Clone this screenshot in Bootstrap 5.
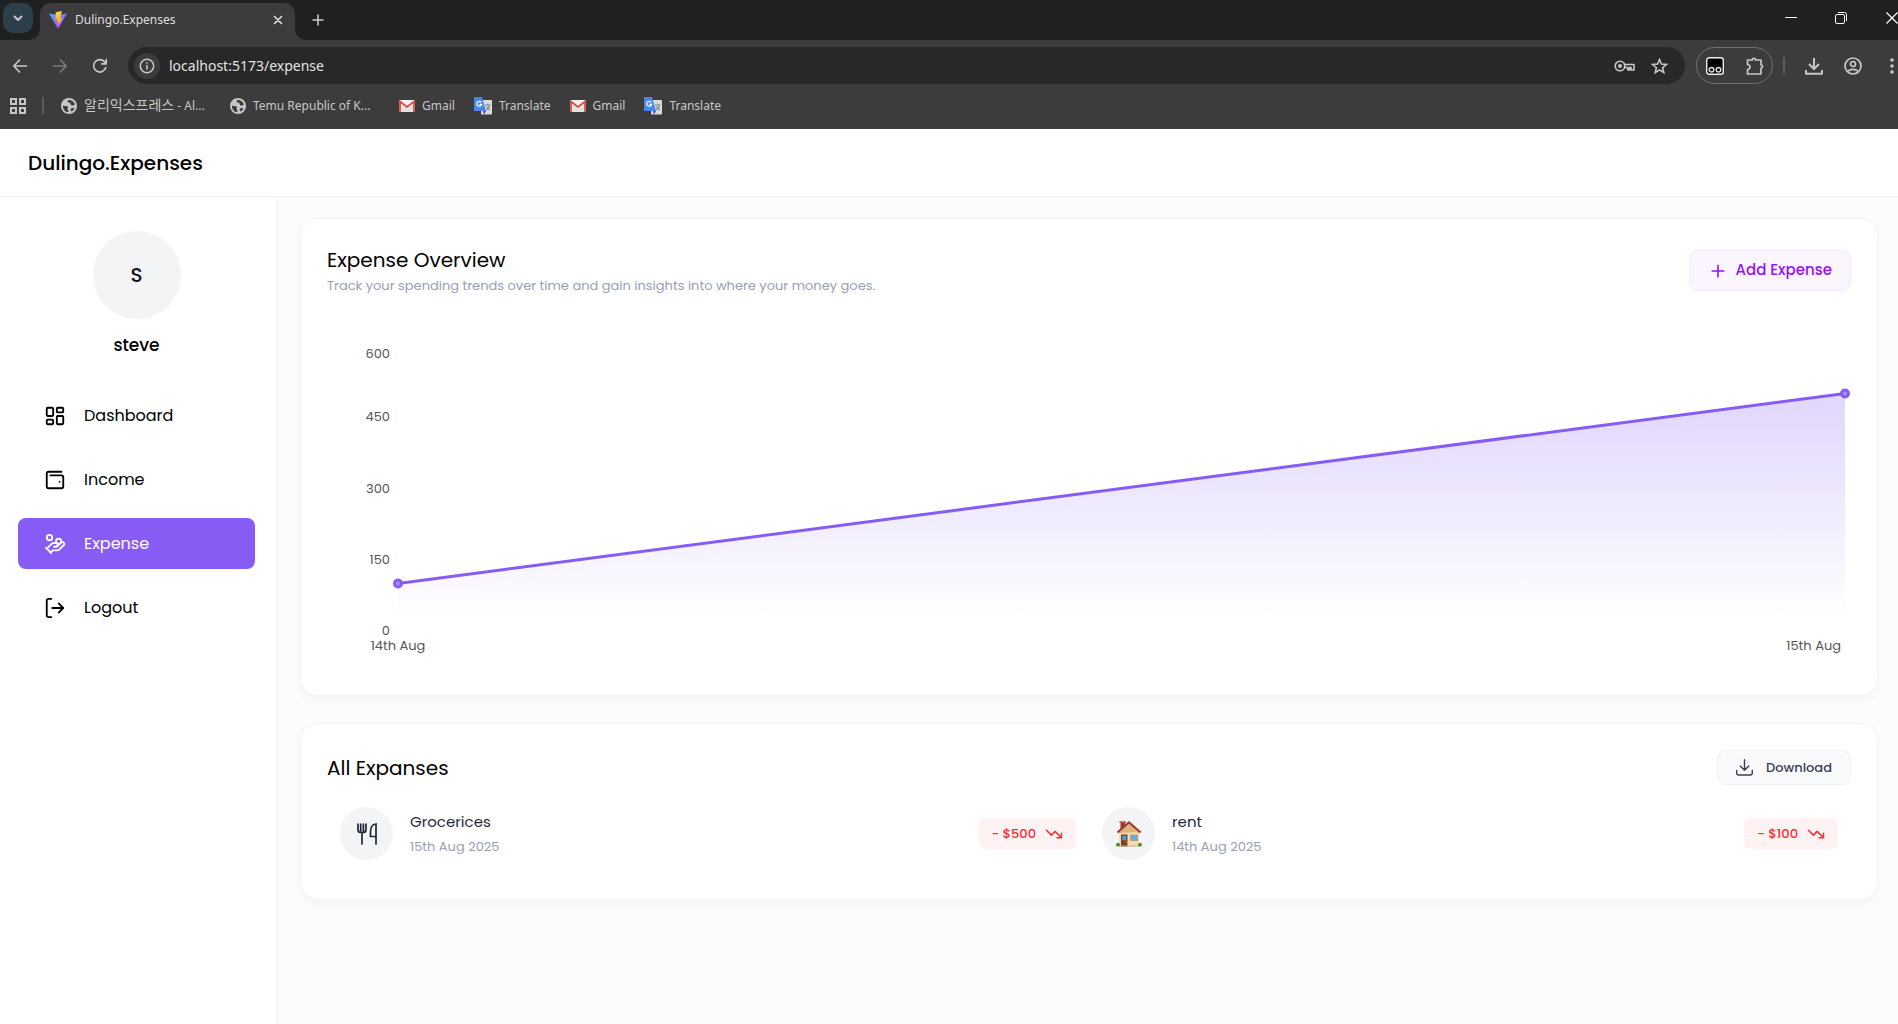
<!DOCTYPE html>
<html lang="en">
<head>
<meta charset="utf-8">
<meta name="viewport" content="width=device-width, initial-scale=1">
<title>Dulingo.Expenses</title>
<link href="https://cdn.jsdelivr.net/npm/bootstrap@5.3.0/dist/css/bootstrap.min.css" rel="stylesheet">
<style>
:root{--ui:"Noto Sans","Noto Sans CJK KR",sans-serif;--violet:#875cf5}
body{font-family:Poppins,Inter,sans-serif;color:#000;background:#fcfcfc;overflow-x:hidden}
svg{display:block;flex:none}
.ico{fill:none;stroke:currentColor;stroke-width:2;stroke-linecap:round;stroke-linejoin:round}
button.plain{background:none;border:0;padding:0;color:inherit;line-height:1}
/* browser chrome */
.browser{background:#3c3c3c;color:#c7c7c7;font-family:var(--ui)}
.tabstrip{background:#1f2120;height:40px;padding-left:3px}
.tabmenu{width:30px;height:30px;margin:3px 0 0;border-radius:10px!important;background:#2d3f4b!important;color:#e3e3e3}
.tab-on{width:255px;height:37px;margin:3px 0 0 7px;padding:0 12px 4px 9px;background:#3c3c3c;border-radius:11px 11px 0 0;color:#dfdfdf;font-size:12px;position:relative}
.tab-on::before,.tab-on::after{content:"";position:absolute;bottom:0;width:11px;height:11px}
.tab-on::before{left:-11px;background:radial-gradient(circle at 0 0,transparent 11px,#3c3c3c 11px)}
.tab-on::after{right:-11px;background:radial-gradient(circle at 100% 0,transparent 11px,#3c3c3c 11px)}
.wincontrols{gap:38px;color:#fff}
.toolbar{height:51px;padding:0 0 0 12px}
.navs{gap:24px;width:116px}
.addr{height:37px;background:#282828;border-radius:19px;padding:0 17px 0 6px}
.addr input{background:none;border:0;outline:0;color:#e3e3e3;font-size:14px;padding:0}
.siteinfo{width:26px;height:26px;border-radius:50%!important;background:#3c3c3c!important;margin-right:9px}
.extpill{width:77px;height:37px;border:1px solid #707070;border-radius:19px;margin:0 10px 0 11px;padding:0 8px 0 9px}
.rightset{gap:21px;margin-left:20px}
.rightset .menu{padding:0 4px 0 7px}
.vline{width:2px;height:17px;background:#5c5c5c;border-radius:1px}
.bookmarks{height:38px;padding:0 0 9px 10px;font-size:12px}
.bookmarks .vline{margin:0 17px 0 16px}
.bookmarks a{color:#c7c7c7;text-decoration:none;white-space:nowrap;gap:7px;margin-right:19px}
.bookmarks .hangul{font-size:14px;line-height:18px}
.bm-wide{width:150px}
/* app */
.apphead{height:68px;padding:0 28px;background:#fff;border-bottom:1px solid #f1f1f1}
.brand{font-size:20px;font-weight:500;line-height:30px;margin:0}
.side{width:278px;background:#fff;border-right:1px solid #f1f1f1;padding:34px 22px 0 18px;min-height:calc(100vh - 197px)}
.avatar{width:88px;height:88px;border-radius:50%;background:#f3f4f6;font-size:20px;font-weight:500;color:#101828}
.uname{font-size:17px;font-weight:500;line-height:26px;margin:13px 0 32px}
.side nav{gap:13px}
.side nav a{height:51px;border-radius:8px;padding:0 26px;gap:18px;color:#000;text-decoration:none;font-size:16px}
.side nav a.on{background:var(--violet);color:#fff}
.mainpane{padding:21px 20px 22px 22px;gap:27px}
.panel{background:#fff;border:1px solid #f3f4f6;border-radius:17px;box-shadow:0 4px 8px #f3f4f6;padding:26px}
.panel h2{font-size:20px;font-weight:400;line-height:30px;margin:0}
.sub{font-size:13px;line-height:20px;color:#99a1af;margin:1px 0 0}
.btn-add{height:41px;margin-top:5px;border:1px solid #f3e8ff;background:#faf5ff;color:#9810fa;border-radius:9px;font-size:15px;font-weight:500;padding:0 18px;gap:8px}
.btn-dl{height:35px;border:1px solid #f0f1f4;background:#f9fafb;color:#364153;border-radius:9px;font-size:13px;font-weight:500;padding:0 18px;gap:13px}
.plot{height:285px;margin:50px 6px 38px 71px}
.plot svg{overflow:visible;width:100%;height:100%}
.plot text{fill:#555;font-size:13px}
.entries{margin-top:9px}
.entry{padding:13px}
.pic{width:53px;height:53px;border-radius:50%;background:#f3f4f6;color:#1e2939;margin-right:17px}
.ename{font-size:15px;line-height:22px;font-weight:400;color:#1e2939}
.edate{font-size:13px;line-height:20px;color:#99a1af;margin-top:4px}
.amt{height:31px;border-radius:6px;background:#fef2f2;color:#fb2c36;font-size:13px;font-weight:500;padding:0 13px;gap:9px}
</style>
</head>
<body>
<svg width="0" height="0" class="position-absolute" aria-hidden="true">
 <defs>
  <symbol id="globe" viewBox="0 0 16 16"><circle cx="8" cy="8" r="8" fill="#c4c7c9"/><path d="M2 7.500C3 8.500 5 7.500 6.500 8.500 8 9.500 5.500 10.500 7 12c1 1 .5 1.500 0 2.200C4 14 1.700 11 2 7.500zM7 2c3-.5 6 1.500 7 4.500-1 .5-1.500 1-2.500 1C9 7.500 10.500 5.500 9 5 7.500 4.600 6 4 7 2zM10 10.500c1.500-.5 2.500-.5 3.500-.5-.5 1.500-1.800 3-3 3.500-.8-.8-1.200-2-.5-3z" fill="#3c3c3c"/></symbol>
  <symbol id="gmail" viewBox="0 0 16 12"><rect width="16" height="12" rx="1.200" fill="#f2f2f2"/><path d="M2 12V4l6 4 6-4v8z" fill="#e2e2e2"/><path d="M1 12V1.500L8 7l7-5.500V12" fill="none" stroke="#d9453a" stroke-width="1.700"/></symbol>
  <symbol id="gtr" viewBox="0 0 18 18"><rect x="7" y="3" width="11" height="14.500" rx="1" fill="#dcdcdc"/><path d="M11 8h5.500M13.700 6.500V8m2 0c-.5 2.500-2 4-4 5m.5-3.500c1 1.500 2 2.500 3.700 3.500" fill="none" stroke="#7c8a92" stroke-width="1.100"/><path d="M1 0h7l4 14H1a1 1 0 0 1-1-1V1a1 1 0 0 1 1-1z" fill="#4a86f0"/><path d="M9 14h3l-2 3.500z" fill="#2c50b8"/><path d="M7.300 5.400A2.500 2.500 0 1 0 7.700 7.300H5.300" fill="none" stroke="#fff" stroke-width="1.200"/></symbol>
  <symbol id="trend" viewBox="0 0 24 24"><path d="M16 17h6v-6M22 17l-8.500-8.500-5 5L2 7"/></symbol>
 </defs>
</svg>

<header class="browser">
 <div class="tabstrip d-flex">
  <button class="plain tabmenu d-flex align-items-center justify-content-center" aria-label="Search tabs"><svg class="ico" width="10" height="10" viewBox="0 0 10 10"><path d="M1.500 3.500 5 7l3.500-3.500"/></svg></button>
  <div class="tab-on d-flex align-items-center">
   <svg width="18" height="18" viewBox="0 0 18 18"><defs><linearGradient id="va" x1="0" y1="0" x2=".6" y2="1"><stop offset="0" stop-color="#41b8ff"/><stop offset="1" stop-color="#bd34fe"/></linearGradient><linearGradient id="vb" x1="0" y1="0" x2="0" y2="1"><stop offset="0" stop-color="#ffd93c"/><stop offset="1" stop-color="#ff9f0a"/></linearGradient></defs><path d="M0 2.500 9 18 18 2.500 9 4z" fill="url(#va)"/><path d="M13 0 6.800 1.300 6.300 8.500l2.300-.5-.7 3.500 1.800-.5L8.800 16l4.700-9-2.500.5z" fill="url(#vb)"/></svg>
   <span class="flex-grow-1 ps-2">Dulingo.Expenses</span>
   <button class="plain" aria-label="Close tab"><svg class="ico" width="10" height="10" viewBox="0 0 10 10"><path d="m1.500 1.500 7 7m0-7-7 7" stroke-width="1.600"/></svg></button>
  </div>
  <button class="plain ms-3" aria-label="New tab"><svg class="ico" width="14" height="36" viewBox="0 0 14 36"><path d="M7 13v10M2 18h10" stroke-width="1.600"/></svg></button>
  <div class="wincontrols d-flex align-items-center ms-auto pb-1">
   <button class="plain" aria-label="Minimize"><svg width="12" height="12" viewBox="0 0 12 12"><path d="M0 5.500h12" stroke="#fff"/></svg></button>
   <button class="plain" aria-label="Restore"><svg width="13" height="12" viewBox="0 0 13 12" fill="none" stroke="#fff"><rect x=".5" y="2.500" width="9" height="9" rx="1.500"/><path d="M3 .5h6.500a2 2 0 0 1 2 2V9"/></svg></button>
   <button class="plain" aria-label="Close"><svg width="12" height="12" viewBox="0 0 12 12"><path d="m.5.500 11 11m0-11-11 11" stroke="#fff" stroke-width="1.200"/></svg></button>
  </div>
 </div>
 <div class="toolbar d-flex align-items-center">
  <div class="navs d-flex align-items-center">
   <button class="plain" aria-label="Back"><svg class="ico" width="16" height="16" viewBox="0 0 16 16"><path d="M14.500 8H2m5.500-6L1.800 8l5.700 6" stroke-width="1.700"/></svg></button>
   <button class="plain" aria-label="Forward"><svg class="ico" width="16" height="16" viewBox="0 0 16 16"><path d="M1.500 8H14M8.500 2l5.700 6-5.700 6" stroke="#797979" stroke-width="1.700"/></svg></button>
   <button class="plain" aria-label="Reload"><svg class="ico" width="16" height="16" viewBox="0 0 16 16"><path d="M13.800 9.500A6.200 6.200 0 1 1 12.500 3.700L14 5.500M14.200 1.500v4.300H9.800" stroke-width="1.700"/></svg></button>
  </div>
  <div class="addr d-flex align-items-center flex-grow-1">
   <button class="plain siteinfo d-flex align-items-center justify-content-center" aria-label="Site information"><svg class="ico" width="16" height="16" viewBox="0 0 16 16"><circle cx="8" cy="8" r="6.700" stroke-width="1.500"/><path d="M8 7.500v3.500M8 4.800v.2" stroke-width="1.600"/></svg></button>
   <input class="flex-grow-1" aria-label="Address" value="localhost:5173/expense">
   <button class="plain me-3" aria-label="Passwords"><svg class="ico" width="21" height="14" viewBox="0 0 21 14"><circle cx="6" cy="7" r="4.800" stroke-width="1.600"/><circle cx="6" cy="7" r="2" fill="currentColor" stroke="none"/><path d="M10.500 5.500H20v5.500h-3V8.500h-1.500V11h-1.700V8.500h-3.300" stroke-width="1.600"/></svg></button>
   <button class="plain" aria-label="Bookmark this page"><svg class="ico" width="17" height="16" viewBox="0 0 17 16"><path d="m8.500 1.500 1.900 4.600 5 .4-3.800 3.200 1.200 4.900-4.300-2.700-4.300 2.700 1.200-4.900L1.600 6.500l5-.4z" stroke-width="1.600" stroke-linejoin="miter"/></svg></button>
  </div>
  <div class="extpill d-flex align-items-center justify-content-between">
   <button class="plain" aria-label="Extension"><svg width="18" height="18" viewBox="0 0 18 18"><rect x=".7" y=".7" width="16.600" height="16.600" rx="2.500" fill="#000" stroke="#eee" stroke-width="1.400"/><g fill="none" stroke="#ddd" stroke-width="1.500"><circle cx="5.500" cy="12.700" r="2.300"/><circle cx="12.500" cy="12.700" r="2.300"/></g></svg></button>
   <button class="plain" aria-label="Extensions"><svg class="ico" width="18" height="18" viewBox="0 0 18 18"><path d="M1.500 3h4.800a1.600 1.600 0 0 1 3.200 0H15v5a1.500 1.500 0 0 1 0 3.200V17H1.500v-4.500a2.500 2.500 0 0 0 0-5z" stroke-width="1.700"/></svg></button>
  </div>
  <span class="vline"></span>
  <div class="rightset d-flex align-items-center">
   <button class="plain" aria-label="Downloads"><svg class="ico" width="18" height="18" viewBox="0 0 18 18"><path d="M9 1v11m-5-5 5 5 5-5M1 13v3.800h16V13" stroke-linecap="butt"/></svg></button>
   <button class="plain" aria-label="Profile"><svg class="ico" width="18" height="18" viewBox="0 0 18 18"><circle cx="9" cy="9" r="8" stroke-width="1.700"/><circle cx="9" cy="7" r="2.500" stroke-width="1.700"/><path d="M3.500 14.500c3-2.800 8-2.800 11 0" stroke-width="1.700"/></svg></button>
   <button class="plain menu" aria-label="Menu"><svg width="4" height="18" viewBox="0 0 4 18" fill="currentColor"><circle cx="2" cy="3" r="1.800"/><circle cx="2" cy="9" r="1.800"/><circle cx="2" cy="15" r="1.800"/></svg></button>
  </div>
 </div>
 <nav class="bookmarks d-flex align-items-center">
  <button class="plain" aria-label="Apps"><svg width="16" height="16" viewBox="0 0 16 16" fill="none" stroke="currentColor" stroke-width="2"><path d="M1 1h5v5H1zM10 1h5v5h-5zM1 10h5v5H1zM10 10h5v5h-5z"/></svg></button>
  <span class="vline"></span>
  <a href="#" class="bm-wide d-flex align-items-center"><svg width="16" height="16"><use href="#globe"/></svg><span><span class="hangul">알리익스프레스</span> - Al...</span></a>
  <a href="#" class="bm-wide d-flex align-items-center"><svg width="16" height="16"><use href="#globe"/></svg>Temu Republic of K...</a>
  <a href="#" class="d-flex align-items-center"><svg width="16" height="12"><use href="#gmail"/></svg>Gmail</a>
  <a href="#" class="d-flex align-items-center"><svg width="18" height="18"><use href="#gtr"/></svg>Translate</a>
  <a href="#" class="d-flex align-items-center"><svg width="16" height="12"><use href="#gmail"/></svg>Gmail</a>
  <a href="#" class="d-flex align-items-center"><svg width="18" height="18"><use href="#gtr"/></svg>Translate</a>
 </nav>
</header>

<div class="apphead d-flex align-items-center"><h1 class="brand">Dulingo.Expenses</h1></div>
<div class="d-flex">
 <aside class="side flex-shrink-0">
  <div class="d-flex flex-column align-items-center">
   <div class="avatar d-flex align-items-center justify-content-center">S</div>
   <div class="uname">steve</div>
  </div>
  <nav class="d-flex flex-column">
   <a href="#" class="d-flex align-items-center"><svg class="ico" width="22" height="22" viewBox="0 0 24 24"><rect x="3" y="3" width="7" height="9" rx="1"/><rect x="14" y="3" width="7" height="5" rx="1"/><rect x="14" y="12" width="7" height="9" rx="1"/><rect x="3" y="16" width="7" height="5" rx="1"/></svg>Dashboard</a>
   <a href="#" class="d-flex align-items-center"><svg class="ico" width="22" height="22" viewBox="0 0 24 24"><path d="M17 14h.01M7 7h12a2 2 0 0 1 2 2v10a2 2 0 0 1-2 2H5a2 2 0 0 1-2-2V5a2 2 0 0 1 2-2h14"/></svg>Income</a>
   <a href="#" class="on d-flex align-items-center" aria-current="page"><svg class="ico" width="22" height="22" viewBox="0 0 24 24"><path d="M11 15h2a2 2 0 1 0 0-4h-3c-.6 0-1.100.200-1.400.600L3 17"/><path d="m7 21 1.600-1.400c.300-.400.800-.600 1.400-.600h4c1.100 0 2.100-.400 2.800-1.200l4.600-4.400a2 2 0 0 0-2.750-2.910l-4.200 3.900"/><path d="m2 16 6 6"/><circle cx="16" cy="9" r="2.900"/><circle cx="6" cy="5" r="3"/></svg>Expense</a>
   <a href="#" class="d-flex align-items-center"><svg class="ico" width="22" height="22" viewBox="0 0 24 24"><path d="M8 2H5a2 2 0 0 0-2 2v16a2 2 0 0 0 2 2h3M9 12h12M16 7l5 5-5 5"/></svg>Logout</a>
  </nav>
 </aside>
 <main class="mainpane d-flex flex-column flex-grow-1">
  <section class="panel">
   <div class="d-flex justify-content-between align-items-start">
    <div><h2>Expense Overview</h2><p class="sub">Track your spending trends over time and gain insights into where your money goes.</p></div>
    <button class="btn-add d-flex align-items-center"><svg class="ico" width="20" height="20" viewBox="0 0 24 24"><path d="M5 12h14M12 5v14" stroke-width="1.900"/></svg>Add Expense</button>
   </div>
   <div class="plot">
    <svg role="img" aria-label="Expenses per day">
     <defs><linearGradient id="fade" x1="0" y1="0" x2="0" y2="1"><stop offset=".05" stop-color="#875cf5" stop-opacity=".24"/><stop offset=".95" stop-color="#875cf5" stop-opacity="0"/></linearGradient></defs>
     <svg viewBox="0 0 100 600" preserveAspectRatio="none"><path d="M0 500 100 100V600H0z" fill="url(#fade)"/><path d="M0 500 100 100" fill="none" stroke="#875cf5" stroke-width="3" vector-effect="non-scaling-stroke"/></svg>
     <g fill="#ab8df8" stroke="#875cf5" stroke-width="3"><circle cx="0" cy="83.330%" r="3.500"/><circle cx="100%" cy="16.670%" r="3.500"/></g>
     <g text-anchor="end"><text x="-8" y="0" dy="12">600</text><text x="-8" y="25%" dy="4">450</text><text x="-8" y="50%" dy="4">300</text><text x="-8" y="75%" dy="4">150</text><text x="-8" y="100%" dy="4">0</text></g>
     <text x="0" y="100%" dy="19" text-anchor="middle">14th Aug</text>
     <text x="100%" y="100%" dx="-4" dy="19" text-anchor="end">15th Aug</text>
    </svg>
   </div>
  </section>
  <section class="panel">
   <div class="d-flex justify-content-between align-items-center">
    <h2>All Expanses</h2>
    <button class="btn-dl d-flex align-items-center"><svg class="ico" width="17" height="17" viewBox="0 0 24 24"><path d="M12 1v15m-6-6 6 6 6-6M1 16v4a2.500 2.500 0 0 0 2.500 2.500h17A2.500 2.500 0 0 0 23 20v-4"/></svg>Download</button>
   </div>
   <div class="entries row g-0">
    <div class="col-6"><div class="entry d-flex align-items-center">
     <div class="pic d-flex align-items-center justify-content-center"><svg width="20" height="22" viewBox="0 0 20 22" fill="none" stroke="currentColor" stroke-width="1.700" stroke-linecap="round"><path d="M1 1v5.500Q1 9.500 3.500 9.500h3Q9 9.500 9 6.500V1M3.700 1v7M6.400 1v7M5 9.500V21M19 21V1c-3.500.200-5.500 3-5.500 8v4.500H19"/></svg></div>
     <div class="flex-grow-1"><div class="ename">Grocerices</div><div class="edate">15th Aug 2025</div></div>
     <div class="amt d-flex align-items-center">- $500<svg class="ico" width="18" height="18"><use href="#trend"/></svg></div>
    </div></div>
    <div class="col-6"><div class="entry d-flex align-items-center">
     <div class="pic d-flex align-items-center justify-content-center"><svg width="26" height="26" viewBox="0 0 26 26"><path d="M4.500 1h4.500v8H4.500z" fill="#8e3b33"/><path d="M3.500.300h6.500v1.700H3.500z" fill="#c0504a"/><path d="M3 11 13 2l10 9v14.500H3z" fill="#f3dcb2"/><path d="M3 12 13 3l10 9v-1z" fill="#dbb47c"/><path d="M1.500 11.500 13 1.500l11.500 10" fill="none" stroke="#a93631" stroke-width="2.300"/><path d="M5 13.500h6.500v12H5z" fill="#7d4128"/><path d="M6.300 14.800h3.900v4.500H6.300z" fill="#4d9bd0"/><circle cx="10.300" cy="21" r=".6" fill="#e8b55a"/><path d="M14 13.500h8v6.500h-8z" fill="#c99e62"/><path d="M14.800 14.300h6.400v4.900h-6.400z" fill="#62aee2"/><path d="M3 24.500h20v1H3z" fill="#c8b08a"/><circle cx="2" cy="23.700" r="1.900" fill="#4f8b33"/><circle cx="24" cy="23.700" r="1.900" fill="#4f8b33"/></svg></div>
     <div class="flex-grow-1"><div class="ename">rent</div><div class="edate">14th Aug 2025</div></div>
     <div class="amt d-flex align-items-center">- $100<svg class="ico" width="18" height="18"><use href="#trend"/></svg></div>
    </div></div>
   </div>
  </section>
 </main>
</div>
<script src="https://cdn.jsdelivr.net/npm/bootstrap@5.3.0/dist/js/bootstrap.bundle.min.js"></script>
</body>
</html>
